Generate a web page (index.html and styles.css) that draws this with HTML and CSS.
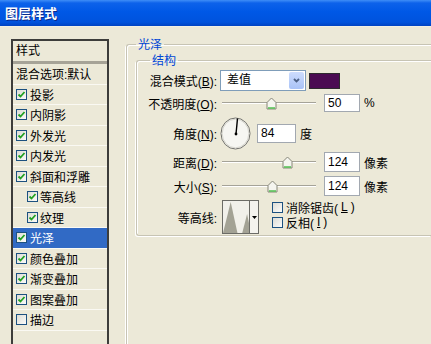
FILE: index.html
```html
<!DOCTYPE html>
<html lang="zh-CN">

<head>
    <meta charset="UTF-8">
    <title>图层样式</title>
    <link rel="stylesheet" href="styles.css">
</head>

<body>
    <div class="titlebar">图层样式</div>

    <div class="dialog">
        <!-- left: list of effects -->
        <div class="style-list">
            <div class="list-head">样式</div>
            <div class="list-row">混合选项:默认</div>
            <div class="list-row"><span class="cb"><svg viewBox="0 0 9 9"><path d="M1.5 4.5l2 2 4-4.5" /></svg></span>投影</div>
            <div class="list-row"><span class="cb"><svg viewBox="0 0 9 9"><path d="M1.5 4.5l2 2 4-4.5" /></svg></span>内阴影</div>
            <div class="list-row"><span class="cb"><svg viewBox="0 0 9 9"><path d="M1.5 4.5l2 2 4-4.5" /></svg></span>外发光</div>
            <div class="list-row"><span class="cb"><svg viewBox="0 0 9 9"><path d="M1.5 4.5l2 2 4-4.5" /></svg></span>内发光</div>
            <div class="list-row"><span class="cb"><svg viewBox="0 0 9 9"><path d="M1.5 4.5l2 2 4-4.5" /></svg></span>斜面和浮雕</div>
            <div class="list-row sub"><span class="cb"><svg viewBox="0 0 9 9"><path d="M1.5 4.5l2 2 4-4.5" /></svg></span>等高线</div>
            <div class="list-row sub"><span class="cb"><svg viewBox="0 0 9 9"><path d="M1.5 4.5l2 2 4-4.5" /></svg></span>纹理</div>
            <div class="list-row active"><span class="cb"><svg viewBox="0 0 9 9"><path d="M1.5 4.5l2 2 4-4.5" /></svg></span>光泽</div>
            <div class="list-row"><span class="cb"><svg viewBox="0 0 9 9"><path d="M1.5 4.5l2 2 4-4.5" /></svg></span>颜色叠加</div>
            <div class="list-row"><span class="cb"><svg viewBox="0 0 9 9"><path d="M1.5 4.5l2 2 4-4.5" /></svg></span>渐变叠加</div>
            <div class="list-row"><span class="cb"><svg viewBox="0 0 9 9"><path d="M1.5 4.5l2 2 4-4.5" /></svg></span>图案叠加</div>
            <div class="list-row"><span class="cb"></span>描边</div>
        </div>

        <!-- right: satin settings -->
        <fieldset class="group outer">
            <legend>光泽</legend>
            <fieldset class="group inner">
                <legend>结构</legend>

                <div class="row r-mode">
                    <span class="label">混合模式(<u>B</u>):</span>
                    <div class="select">
                        <span class="select-text">差值</span>
                        <span class="select-btn"><svg width="7" height="5" viewBox="0 0 7 5"><path d="M1 1l2.5 2.5L6 1" /></svg></span>
                    </div>
                    <span class="swatch"></span>
                </div>

                <div class="row r-opacity">
                    <span class="label">不透明度(<u>O</u>):</span>
                    <div class="slider">
                        <span class="track"></span>
                        <svg class="thumb" style="left: 53%" viewBox="0 0 11 13"><path d="M1 5.5L5.5 1 10 5.5V12H1z" /><path class="thumb-base" d="M2 11h7" /></svg>
                    </div>
                    <span class="field">50</span>
                    <span class="unit">%</span>
                </div>

                <div class="row r-angle">
                    <span class="label">角度(<u>N</u>):</span>
                    <svg class="dial" width="31" height="33" viewBox="0 0 31 33">
                        <ellipse cx="15.5" cy="16.5" rx="14.5" ry="15.5" fill="#f6f6f2" stroke="#6f6f6a" />
                        <ellipse cx="15.5" cy="16.5" rx="13.3" ry="14.3" fill="none" stroke="#d8d7cf" />
                        <line x1="16" y1="17" x2="17.5" y2="1.5" stroke="#000" stroke-width="1.4" />
                        <circle cx="16" cy="17" r="1.4" fill="#000" />
                    </svg>
                    <span class="field wide">84</span>
                    <span class="unit">度</span>
                </div>

                <div class="row r-distance">
                    <span class="label">距离(<u>D</u>):</span>
                    <div class="slider">
                        <span class="track"></span>
                        <svg class="thumb" style="left: 70%" viewBox="0 0 11 13"><path d="M1 5.5L5.5 1 10 5.5V12H1z" /><path class="thumb-base" d="M2 11h7" /></svg>
                    </div>
                    <span class="field tall">124</span>
                    <span class="unit">像素</span>
                </div>

                <div class="row r-size">
                    <span class="label">大小(<u>S</u>):</span>
                    <div class="slider">
                        <span class="track"></span>
                        <svg class="thumb" style="left: 54%" viewBox="0 0 11 13"><path d="M1 5.5L5.5 1 10 5.5V12H1z" /><path class="thumb-base" d="M2 11h7" /></svg>
                    </div>
                    <span class="field tall">124</span>
                    <span class="unit">像素</span>
                </div>

                <div class="row r-contour">
                    <span class="label">等高线:</span>
                    <div class="contour">
                        <svg class="contour-preview" viewBox="0 0 27 32" preserveAspectRatio="none">
                            <polygon points="0,32 8,1 15,32" fill="#a3a295" />
                            <polygon points="20,32 25,13 27,22 27,32" fill="#a3a295" />
                        </svg>
                        <span class="contour-btn"><svg width="5" height="3" viewBox="0 0 5 3"><path d="M0 0h5L2.5 3z" /></svg></span>
                    </div>
                    <div class="checks">
                        <div class="check-line"><span class="cb"></span>消除锯齿(<u>L</u>)</div>
                        <div class="check-line"><span class="cb"></span>反相(<u>I</u>)</div>
                    </div>
                </div>
            </fieldset>
        </fieldset>
    </div>
</body>

</html>
```

FILE: styles.css
```css
html,
body {
    margin: 0;
}

body {
    width: 431px;
    height: 344px;
    overflow: hidden;
    background-color: #ece9d8;
    color: #000;
    font-family: 'Liberation Sans', 'Noto Sans CJK SC', sans-serif;
    font-size: 12px;
}

.titlebar {
    height: 26px;
    line-height: 26px;
    padding-left: 5px;
    color: #fff;
    font-family: 'Noto Sans CJK SC', sans-serif;
    font-size: 13px;
    font-weight: bold;
    text-shadow: 1px 1px 0 #0a2a8c;
    background: linear-gradient(#3f8ef7 0, #0d62ea 3px, #0058e6 45%, #0053dd 85%, #0043c2 100%);
    border-bottom: 1px solid #f2f0e4;
}

.dialog {
    display: flex;
    align-items: flex-start;
    padding: 9px 0 0 11px;
}

/* effects list, runs off the bottom of the window */
.style-list {
    flex: none;
    box-sizing: border-box;
    width: 98px;
    height: 305px;
    margin-top: 3px;
    border: 2px solid #3d3d3b;
    border-bottom: 0;
    background-color: #ece9d8;
}

.list-head {
    height: 20px;
    line-height: 20px;
    padding-left: 3px;
    border-bottom: 3px solid #a6a397;
}

.list-row {
    display: flex;
    align-items: center;
    gap: 3px;
    height: 19.5px;
    padding-left: 3px;
    border-bottom: 1px solid #faf9f3;
    white-space: nowrap;
}

.list-row.sub {
    padding-left: 14px;
    gap: 2px;
}

.list-row.active {
    background-color: #316ac5;
    color: #fff;
}

.cb {
    flex: none;
    display: inline-flex;
    align-items: center;
    justify-content: center;
    box-sizing: border-box;
    width: 11px;
    height: 11px;
    border: 1px solid #1c5180;
    background: linear-gradient(135deg, #dcdcd5, #fbfbf9);
}

.cb svg {
    width: 9px;
    height: 9px;
    fill: none;
    stroke: #21a121;
    stroke-width: 1.8;
}

/* group boxes, open on the right where the window cuts them */
.group {
    flex: none;
    box-sizing: border-box;
    margin: 0;
    min-width: 0;
    border: 1px solid #c7c4b4;
    border-right: 0;
    border-radius: 3px 0 0 3px;
    box-shadow: inset 1px 1px 0 #fff, -1px 1px 0 #fff;
}

.group legend {
    padding: 0 2px;
    line-height: 16px;
    color: #0046d5;
    font-family: 'Noto Sans CJK SC', sans-serif;
}

.outer {
    width: 305px;
    height: 308px;
    margin-left: 17px;
    padding: 0 0 0 9px;
    border-bottom: 0;
    border-radius: 3px 0 0 0;
}

.inner {
    width: 295px;
    padding: 2px 0 1px 3px;
}

.inner legend {
    margin-left: 10px;
}

/* rows of settings */
.row {
    display: flex;
    align-items: center;
    white-space: nowrap;
}

.label {
    width: 77px;
    margin-right: 3px;
    text-align: right;
}

.r-mode {
    height: 21px;
}

.r-opacity {
    height: 18px;
    margin-top: 3px;
}

.r-angle {
    height: 33px;
    margin-top: 5px;
}

.r-distance {
    height: 20px;
    margin-top: 2px;
}

.r-size {
    height: 20px;
    margin-top: 4px;
}

.r-contour {
    height: 34px;
    margin-top: 4px;
}

.select {
    display: flex;
    box-sizing: border-box;
    width: 86px;
    height: 21px;
    border: 1px solid #7f9db9;
    background-color: #fff;
}

.select-text {
    flex: 1;
    padding-left: 6px;
    line-height: 19px;
}

.select-btn {
    display: flex;
    align-items: center;
    justify-content: center;
    width: 15px;
    margin: 1px;
    border-radius: 2px;
    background: linear-gradient(#cddcfd, #a9c3f7);
}

.select-btn svg {
    fill: none;
    stroke: #4d6185;
    stroke-width: 1.8;
}

.swatch {
    box-sizing: border-box;
    width: 31px;
    height: 16px;
    margin-left: 3px;
    border: 1px solid #2e2a2e;
    background-color: #4b0b52;
}

.slider {
    position: relative;
    display: flex;
    align-items: center;
    width: 96px;
    height: 18px;
    margin-right: 8px;
}

.track {
    flex: 1;
    margin-left: 2px;
    height: 0;
    border-top: 1px solid #a5a398;
    border-bottom: 1px solid #fff;
}

.thumb {
    position: absolute;
    top: 3px;
    width: 11px;
    height: 13px;
    margin-left: -5px;
    fill: #f5f5ef;
    stroke: #878779;
    stroke-width: 1;
}

.thumb .thumb-base {
    fill: none;
    stroke: #4fbf4f;
    stroke-width: 1.5;
}

.field {
    box-sizing: border-box;
    width: 36px;
    height: 18px;
    padding-left: 3px;
    line-height: 16px;
    border: 1px solid #a2a8b0;
    background-color: #fff;
}

.field.wide {
    width: 39px;
    height: 19px;
    line-height: 17px;
    margin-left: 6px;
}

.field.tall {
    height: 20px;
    line-height: 18px;
}

.unit {
    margin-left: 4px;
}

.contour {
    display: flex;
    box-sizing: border-box;
    width: 37px;
    height: 34px;
    margin-left: 2px;
    border: 1px solid #6b6b66;
    background-color: #f1f0ea;
}

.contour-preview {
    flex: 1;
    height: 32px;
}

.contour-btn {
    display: flex;
    align-items: center;
    justify-content: center;
    width: 8px;
    border-left: 1px solid #6b6b66;
    background-color: #f4f3ee;
}

.checks {
    align-self: flex-start;
    display: flex;
    flex-direction: column;
    gap: 3px;
    margin: 1px 0 0 13px;
}

.check-line {
    display: flex;
    align-items: center;
    gap: 3px;
    height: 12px;
}
```
